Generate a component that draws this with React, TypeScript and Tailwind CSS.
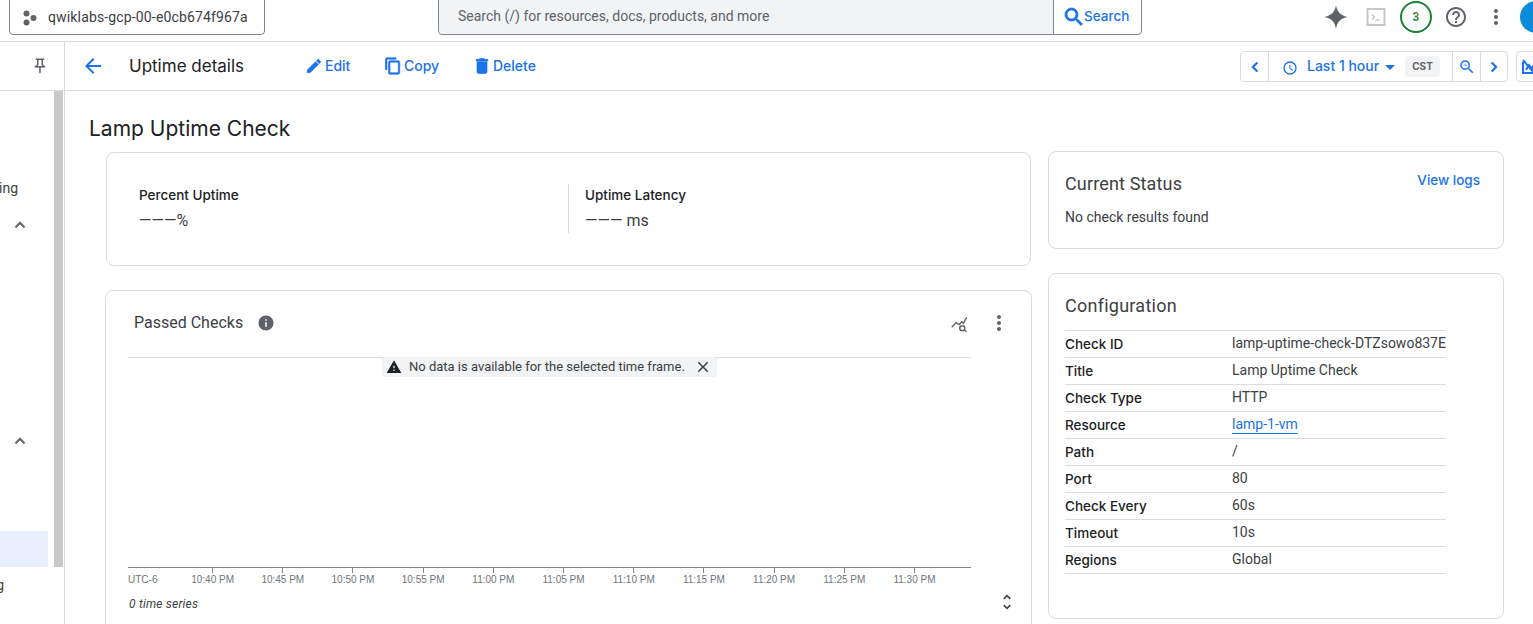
import React from "react";

const heading = { fontFamily: 'Inter, Roboto, sans-serif' };

function Icon({ d, size = 24, className = "", bold = false }: { d: string; size?: number; className?: string; bold?: boolean }) {
  return (
    <svg width={size} height={size} viewBox="0 0 24 24" fill="currentColor" stroke={bold ? "currentColor" : "none"} strokeWidth={bold ? 0.8 : 0} className={"shrink-0 " + className}>
      <path d={d} />
    </svg>
  );
}

const rows: [string, string][] = [
  ["Check ID", "lamp-uptime-check-DTZsowo837E"],
  ["Title", "Lamp Uptime Check"],
  ["Check Type", "HTTP"],
  ["Resource", "lamp-1-vm"],
  ["Path", "/"],
  ["Port", "80"],
  ["Check Every", "60s"],
  ["Timeout", "10s"],
  ["Regions", "Global"],
];

const ticks = ["10:40 PM", "10:45 PM", "10:50 PM", "10:55 PM", "11:00 PM", "11:05 PM", "11:10 PM", "11:15 PM", "11:20 PM", "11:25 PM", "11:30 PM"];

function TopBar() {
  return (
    <div className="flex h-[42px] shrink-0 items-start border-b border-[#dadce0]">
      <div className="ml-[9px] -mt-[5px] flex h-[40px] w-[256px] shrink-0 items-center rounded-[4px] border border-[#80868b] pt-[5px] pl-[13px] text-[14px] tracking-[0.15px] text-[#3c4043]">
        <svg width="15" height="16" viewBox="0 0 15 16" fill="#5f6368" className="shrink-0">
          <circle cx="3.5" cy="3.5" r="3" />
          <circle cx="3.5" cy="12.5" r="3" />
          <circle cx="10.5" cy="8" r="3" />
        </svg>
        <span className="ml-[10px] whitespace-nowrap">qwiklabs-gcp-00-e0cb674f967a</span>
      </div>
      <div className="ml-[173px] -mt-[5px] flex h-[40px] w-[704px] shrink-0 rounded-[4px] border border-[#80868b] text-[14px]">
        <div className="flex w-[614px] items-center rounded-l-[4px] bg-[#f1f3f4] pt-[2px] pl-[19px] text-[#5f6368]">
          Search (/) for resources, docs, products, and more
        </div>
        <div className="flex flex-1 items-center border-l border-[#80868b] pt-[3px] pl-[8px] text-[14px] font-medium text-[#1a73e8]" style={heading}>
          <Icon size={24} bold d="M15.5 14h-.79l-.28-.27A6.47 6.47 0 0 0 16 9.5 6.5 6.5 0 1 0 9.5 16c1.61 0 3.09-.59 4.23-1.57l.27.28v.79l5 4.99L20.49 19l-4.99-5zm-6 0C7.01 14 5 11.99 5 9.5S7.01 5 9.5 5 14 7.01 14 9.5 11.99 14 9.5 14z" />
          <span className="ml-[-2px] text-[13.5px]">Search</span>
        </div>
      </div>
      <div className="ml-[181px] mt-[1px] flex h-[32px] shrink-0 items-center">
        <svg width="26" height="26" viewBox="0 0 24 24" fill="#5f6368" className="shrink-0">
          <path d="M12 1c.9 6.4 4.6 10.100 11 11-6.400.9-10.100 4.600-11 11-.9-6.400-4.600-10.100-11-11 6.400-.9 10.100-4.600 11-11z" />
        </svg>
        <svg width="20" height="20" viewBox="0 0 20 20" fill="none" className="ml-[17px] shrink-0">
          <rect x="1.500" y="2" width="17" height="16" stroke="#c4c7c9" strokeWidth="2" />
          <path d="M6 7.500l2.500 2.500L6 12.500M9.500 13h4" stroke="#c4c7c9" strokeWidth="1.500" />
        </svg>
        <div className="ml-[14px] flex h-[32px] w-[32px] shrink-0 items-center justify-center rounded-full border-2 border-[#188038] text-[12px] font-bold">
          <span className="bg-linear-to-tr from-[#1a73e8] via-[#188038] to-[#c9a100] bg-clip-text text-transparent">3</span>
        </div>
        <Icon className="ml-[12px] text-[#5f6368]" d="M11 18h2v-2h-2v2zm1-16C6.480 2 2 6.480 2 12s4.480 10 10 10 10-4.480 10-10S17.520 2 12 2zm0 18c-4.410 0-8-3.590-8-8s3.590-8 8-8 8 3.590 8 8-3.590 8-8 8zm0-14c-2.210 0-4 1.790-4 4h2c0-1.100.9-2 2-2s2 .9 2 2c0 2-3 1.750-3 5h2c0-2.250 3-2.500 3-5 0-2.210-1.790-4-4-4z" />
        <Icon className="ml-[16px] text-[#5f6368]" d="M12 8c1.100 0 2-.9 2-2s-.9-2-2-2-2 .9-2 2 .9 2 2 2zm0 2c-1.100 0-2 .9-2 2s.9 2 2 2 2-.9 2-2-.9-2-2-2zm0 6c-1.100 0-2 .9-2 2s.9 2 2 2 2-.9 2-2-.9-2-2-2z" />
        <div className="ml-[12px] h-[32px] w-[32px] shrink-0 rounded-full bg-[#0b8bd9]" />
      </div>
    </div>
  );
}

function HeaderAction({ d, label, className, size = 18, gap = "ml-[2px]" }: { d: string; label: string; className: string; size?: number; gap?: string }) {
  return (
    <div className={"flex items-center text-[14px] font-medium text-[#1a73e8] " + className} style={heading}>
      <Icon size={size} bold d={d} />
      <span className={"pb-[2px] " + gap}>{label}</span>
    </div>
  );
}

function SubHeader() {
  return (
    <div className="flex h-[49px] shrink-0 border-b border-[#dadce0]">
      <div className="flex w-[65px] shrink-0 items-center justify-end border-r border-[#dadce0] pr-[15px] text-[#5f6368]">
        <Icon size={18} d="M14 4v5c0 1.120.37 2.160 1 3H9c.65-.86 1-1.900 1-3V4h4m3-2H7c-.55 0-1 .45-1 1s.45 1 1 1h1v5c0 1.660-1.340 3-3 3v2h5.970v7l1 1 1-1v-7H19v-2c-1.660 0-3-1.340-3-3V4h1c.55 0 1-.45 1-1s-.45-1-1-1z" />
      </div>
      <div className="flex min-w-0 flex-1 items-center pl-[16px]">
        <Icon className="text-[#1a73e8]" d="M20 11H7.830l5.590-5.590L12 4l-8 8 8 8 1.410-1.410L7.830 13H20v-2z" />
        <div className="ml-[24px] w-[176px] pt-[2px] text-[17px] text-[#202124]" style={heading}>Uptime details</div>
        <HeaderAction label="Edit" className="w-[79px]" d="M3 17.250V21h3.750L17.810 9.940l-3.750-3.750L3 17.250zM20.710 7.040a1 1 0 0 0 0-1.410l-2.340-2.340a1 1 0 0 0-1.410 0l-1.830 1.830 3.750 3.750 1.830-1.830z" />
        <HeaderAction label="Copy" className="w-[88px]" d="M16 1H4c-1.100 0-2 .9-2 2v14h2V3h12V1zm3 4H8c-1.100 0-2 .9-2 2v14c0 1.100.9 2 2 2h11c1.100 0 2-.9 2-2V7c0-1.100-.9-2-2-2zm0 16H8V7h11v14z" />
        <HeaderAction label="Delete" className="" size={20} gap="ml-[1px]" d="M6 19c0 1.100.9 2 2 2h8c1.100 0 2-.9 2-2V7H6v12zM19 4h-3.500l-1-1h-5l-1 1H5v2h14V4z" />
      </div>
      <div className="-mr-[9px] flex shrink-0 items-center pt-[1px] text-[#1a73e8]">
        <div className="flex h-[31px] w-[268px] rounded-[4px] border border-[#dadce0]">
          <div className="flex w-[28px] items-center justify-center border-r border-[#dadce0]">
            <Icon size={20} bold d="M15.410 7.410 14 6l-6 6 6 6 1.410-1.410L10.830 12z" />
          </div>
          <div className="flex w-[184px] items-center border-r border-[#dadce0] pl-[13px] text-[14px] font-medium" style={heading}>
            <svg width="16" height="16" viewBox="0 0 24 24" fill="currentColor" className="mt-[2px] shrink-0">
              <path d="M12 2a10 10 0 1 0 0 20 10 10 0 0 0 0-20zm0 18a8 8 0 1 1 0-16 8 8 0 0 1 0 16zm.5-13H11v6l5.200 3.200.8-1.300-4.500-2.700V7z" />
            </svg>
            <span className="ml-[9px] w-[78px] whitespace-nowrap pb-[2px]">Last 1 hour</span>
            <svg width="10" height="5" viewBox="0 0 10 5" fill="currentColor" className="mt-[1px] shrink-0">
              <path d="M0 0h10L5 5z" />
            </svg>
            <span className="ml-[10px] flex h-[21px] w-[35px] items-center justify-center rounded-[4px] bg-[#f1f3f4] text-[10px] font-bold text-[#5f6368]">CST</span>
          </div>
          <div className="flex w-[28px] items-center justify-center border-r border-[#dadce0]">
            <Icon size={18} d="M15.500 14h-.79l-.28-.27A6.470 6.470 0 0 0 16 9.500 6.500 6.500 0 1 0 9.500 16c1.610 0 3.090-.59 4.230-1.570l.27.28v.79l5 4.990L20.490 19l-4.990-5zm-6 0C7.010 14 5 11.990 5 9.500S7.010 5 9.500 5 14 7.010 14 9.500 11.990 14 9.500 14zM7 9h5v1H7z" />
          </div>
          <div className="flex flex-1 items-center justify-center">
            <Icon size={20} bold d="M8.590 16.590 10 18l6-6-6-6-1.410 1.410L13.170 12z" />
          </div>
        </div>
        <div className="ml-[8px] flex h-[31px] w-[26px] items-center justify-center rounded-[4px] border border-[#dadce0]">
          <svg width="16" height="16" viewBox="0 0 16 16" fill="none" stroke="currentColor" strokeWidth="2">
            <path d="M2 1l12 14M2 3v11h12M5 11l3-5 3 4 3-7" />
          </svg>
        </div>
      </div>
    </div>
  );
}

function Sidebar() {
  return (
    <div className="flex w-[65px] shrink-0 border-r border-[#dadce0]">
      <div className="w-[54px] shrink-0 text-[14px] text-[#3c4043]">
        <div className="mt-[87px] flex h-[20px] w-[18px] justify-end overflow-hidden whitespace-nowrap leading-[20px]">Monitoring</div>
        <div className="mt-[17px] flex justify-end pr-[24px] text-[#5f6368]">
          <Icon size={20} bold d="M7.410 15.410 12 10.830l4.590 4.580L18 14l-6-6-6 6z" />
        </div>
        <div className="mt-[196px] flex justify-end pr-[24px] text-[#5f6368]">
          <Icon size={20} bold d="M7.410 15.410 12 10.830l4.590 4.580L18 14l-6-6-6 6z" />
        </div>
        <div className="mt-[80px] h-[36px] w-[48px] bg-[#e8f0fe]" />
        <div className="mt-[8px] flex h-[20px] w-[4px] justify-end overflow-hidden whitespace-nowrap leading-[20px]">Logging</div>
      </div>
      <div className="h-[476px] w-[9px] shrink-0 bg-[#c8c8c8]" />
    </div>
  );
}

function Chart() {
  return (
    <div className="relative ml-[40px] mt-[24px] h-[400px] w-[927px] rounded-[8px] border border-[#dadce0] pl-[22px]">
      <div className="flex h-[66px] items-center pb-[3px] pl-[6px] pr-[20px]">
        <span className="text-[16px] text-[#3c4043]">Passed Checks</span>
        <Icon size={18} className="ml-[14px] text-[#5f6368]" d="M12 2C6.480 2 2 6.480 2 12s4.480 10 10 10 10-4.480 10-10S17.520 2 12 2zm1 15h-2v-6h2v6zm0-8h-2V7h2v2z" />
        <svg width="18" height="18" viewBox="0 0 18 18" fill="none" stroke="#5f6368" strokeWidth="1.400" className="ml-auto mt-[2px] shrink-0">
          <path d="M1.700 12.300 6 7.700l3.300 2 2.400-3 1.600 1.600 3.400-6" />
          <circle cx="12.300" cy="13.300" r="2.500" />
          <path d="M14.200 15l2.500 1.700" />
        </svg>
        <Icon className="ml-[19px] text-[#5f6368]" size={24} d="M12 8c1.100 0 2-.9 2-2s-.9-2-2-2-2 .9-2 2 .9 2 2 2zm0 2c-1.100 0-2 .9-2 2s.9 2 2 2 2-.9 2-2-.9-2-2-2zm0 6c-1.100 0-2 .9-2 2s.9 2 2 2 2-.9 2-2-.9-2-2-2z" />
      </div>
      <div className="h-[211px] w-[843px] border-b border-t border-b-[#80868b] border-t-[#dadce0]" />
      <div className="flex w-[843px] text-[10px] text-[#70757a]" style={{ fontFamily: '"Liberation Sans", Arial, sans-serif' }}>
        <div className="w-[49.500px] shrink-0 pt-[6px] leading-[12px]">UTC-6</div>
        {ticks.map((t) => (
          <div key={t} className="flex w-[70.200px] shrink-0 flex-col items-center">
            <div className="h-[5px] w-px bg-[#80868b]" />
            <div className="mt-px whitespace-nowrap leading-[12px]">{t}</div>
          </div>
        ))}
      </div>
      <div className="mt-[6px] flex w-[889px] items-center justify-between pl-px">
        <span className="text-[12px] italic tracking-[0.2px] text-[#3c4043]">0 time series</span>
        <Icon size={20} className="mb-[4px] text-[#3c4043]" d="M12 5.830 15.170 9l1.410-1.410L12 3 7.410 7.590 8.830 9 12 5.830zm0 12.340L8.830 15l-1.410 1.410L12 21l4.590-4.590L15.170 15 12 18.170z" />
      </div>
      <div className="absolute left-[276px] top-[66px] flex h-[20px] w-[335px] items-center rounded-[3px] bg-[#f1f3f4] pl-[4px] text-[13px] text-[#3c4043]">
        <Icon size={16} className="text-[#202124]" d="M1 21h22L12 2 1 21zm12-3h-2v-2h2v2zm0-4h-2v-4h2v4z" />
        <span className="ml-[7px] whitespace-nowrap">No data is available for the selected time frame.</span>
        <Icon size={18} className="ml-[9px] text-[#3c4043]" d="M19 6.410 17.590 5 12 10.590 6.410 5 5 6.410 10.590 12 5 17.590 6.410 19 12 13.410 17.590 19 19 17.590 13.410 12z" />
      </div>
    </div>
  );
}

function Content() {
  return (
    <div className="flex min-w-0 flex-1">
      <div className="w-[983px] shrink-0">
        <h1 className="ml-[24px] mt-[24px] text-[21px] leading-[28px] text-[#202124]" style={heading}>Lamp Uptime Check</h1>
        <div className="ml-[41px] mt-[9px] flex h-[114px] w-[925px] rounded-[8px] border border-[#dadce0] pl-[32px] pt-[31px]">
          <div className="h-[49px] w-[429px]">
            <div className="pt-[1px] text-[13.500px] font-medium leading-[20px] text-[#202124]" style={heading}>Percent Uptime</div>
            <div className="mt-[4px] text-[16px] leading-[24px] text-[#3c4043]">———%</div>
          </div>
          <div className="h-[49px] border-l border-[#dadce0] pl-[16px]">
            <div className="pt-[1px] text-[13.500px] font-medium leading-[20px] text-[#202124]" style={heading}>Uptime Latency</div>
            <div className="mt-[4px] text-[16px] leading-[24px] text-[#3c4043]">——— ms</div>
          </div>
        </div>
        <Chart />
      </div>
      <div className="w-[456px] shrink-0 pt-[60px]">
        <div className="flex h-[98px] justify-between rounded-[8px] border border-[#dadce0] pl-[16px] pr-[23px] pt-[20px]">
          <div>
            <div className="text-[18px] leading-[24px] tracking-[0.15px] text-[#3c4043]">Current Status</div>
            <div className="mt-[11px] text-[14px] leading-[20px] text-[#3c4043]">No check results found</div>
          </div>
          <div className="text-[13.500px] font-medium leading-[16px] text-[#1a73e8]" style={heading}>View logs</div>
        </div>
        <div className="mt-[24px] h-[346px] rounded-[8px] border border-[#dadce0] pl-[16px] pt-[20px]">
          <div className="text-[18px] leading-[24px] tracking-[0.25px] text-[#3c4043]">Configuration</div>
          <div className="mt-[12px] w-[381px] border-t border-[#dadce0]">
            {rows.map(([k, v]) => (
              <div key={k} className="flex h-[27px] items-center border-b border-[#dadce0] pb-[2px] text-[14px] text-[#3c4043]">
                <span className="w-[167px] shrink-0 pt-[2px] text-[13.500px] font-medium text-[#202124]" style={heading}>{k}</span>
                {k === "Resource" ? (
                  <span className="border-b border-[#1a73e8] leading-[18px] text-[#1a73e8]">{v}</span>
                ) : (
                  <span className="whitespace-nowrap">{v}</span>
                )}
              </div>
            ))}
          </div>
        </div>
      </div>
    </div>
  );
}

export default function App() {
  return (
    <div className="flex h-[624px] w-[1533px] flex-col overflow-hidden bg-white" style={{ fontFamily: 'Roboto, "Noto Sans", sans-serif' }}>
      <TopBar />
      <SubHeader />
      <div className="flex min-h-0 flex-1">
        <Sidebar />
        <Content />
      </div>
    </div>
  );
}
